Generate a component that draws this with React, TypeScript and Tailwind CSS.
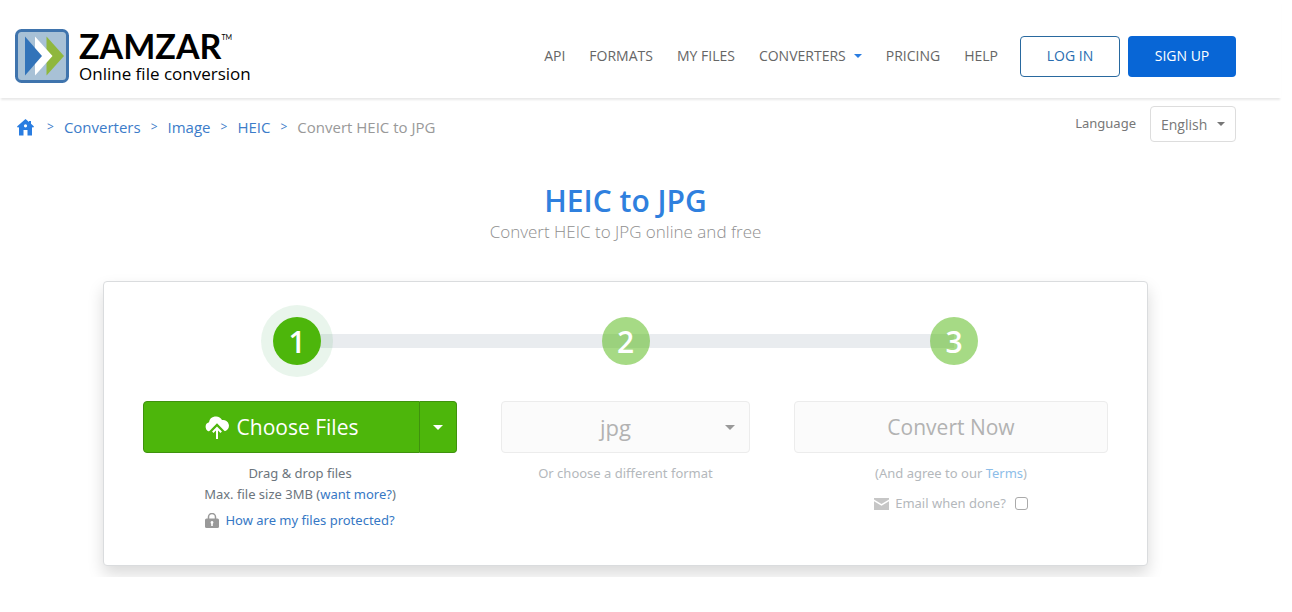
import type { ReactNode } from "react";

function Caret({ className }: { className: string }) {
  return (
    <svg viewBox="0 0 8 4" className={`pointer-events-none shrink-0 fill-current ${className}`} aria-hidden="true">
      <path d="M0 0h8L4 4z" />
    </svg>
  );
}

function LogoMark() {
  return (
    <svg viewBox="0 0 54 54" className="size-[54px] shrink-0" aria-hidden="true">
      <rect x="1.5" y="1.5" width="51" height="51" rx="5" fill="#a8c1d6" stroke="#3f74ad" strokeWidth="3" />
      <path d="M31.500 7.500 49 27 31.500 46.500z" fill="#8fb73e" />
      <path d="M20 7.500 37.500 27 20 46.500z" fill="#fff" />
      <path d="M10 7.500 27 27 10 46.500z" fill="#3273b9" />
    </svg>
  );
}

function HomeIcon() {
  return (
    <svg viewBox="0 0 17 17" className="h-[17px] w-[17px]" aria-hidden="true">
      <path
        fill="#2a7de1"
        fillRule="evenodd"
        d="M8.500 0 0 7.500l1 1.300L2 8v8.500h4.500V11h4v5.500H15V8l1 .8 1-1.300-3-2.700V2h-2v1zM8.500 5.200a1.600 1.600 0 1 1 0 3.200 1.600 1.600 0 0 1 0-3.200z"
      />
    </svg>
  );
}

function UploadIcon() {
  return (
    <svg viewBox="0 0 24 24" className="size-6" aria-hidden="true">
      <path
        fill="#fff"
        d="M5.200 16.500A4.700 4.700 0 0 1 4 7.300 7 7 0 0 1 17 5a5.800 5.800 0 0 1 2.200 11.500z"
      />
      <path d="M12 24V13M5.500 18.500 12 11.800l6.500 6.700" fill="none" stroke="#4db60b" strokeWidth="5" />
      <path d="M12 24V13M7.800 17.300 12 13l4.200 4.300" fill="none" stroke="#fff" strokeWidth="2" />
    </svg>
  );
}

function LockIcon() {
  return (
    <svg viewBox="0 0 14 15" className="h-[15px] w-3.5" aria-hidden="true">
      <path d="M3.500 7V4a3.500 3.500 0 0 1 7 0v3" fill="none" stroke="#999" strokeWidth="1.500" />
      <rect y="5.500" width="14" height="9.500" rx="1.500" fill="#999" />
      <path d="M7 8a1.500 1.500 0 0 1 .8 2.700V13H6.200v-2.300A1.500 1.500 0 0 1 7 8z" fill="#fff" />
    </svg>
  );
}

function MailIcon() {
  return (
    <svg viewBox="0 0 15 12" className="h-3 w-[15px]" aria-hidden="true">
      <path d="M0 0h15v1.500L7.500 6 0 1.500z" fill="#c6c6c6" />
      <path d="M0 3.200 7.500 7.700 15 3.200V12H0z" fill="#c6c6c6" />
    </svg>
  );
}

function NavLink({ children }: { children: ReactNode }) {
  return (
    <a href="#" className="text-[#666]">
      {children}
    </a>
  );
}

const crumbs = ["Converters", "Image", "HEIC"];

function Header() {
  return (
    <header className="relative shadow-[0_3px_2px_-1px_rgba(0,0,0,0.09)]">
      <div className="mr-[30px] flex h-[98px] items-center justify-between pt-3.5 pr-[15px] pl-[15px]">
        <a href="#" className="flex items-center gap-2.5 text-black">
          <LogoMark />
          <span className="flex flex-col font-['Lato',sans-serif]">
            <span className="flex items-start">
              <span className="text-[34px] leading-9 font-bold">ZAMZAR</span>
              <span className="pt-1 text-[7px] leading-[10px]">TM</span>
            </span>
            <span className="font-['Open_Sans',sans-serif] text-[17px] leading-5">Online file conversion</span>
          </span>
        </a>
        <nav className="flex items-center text-sm">
          <div className="mr-[22px] flex items-center gap-6">
            <NavLink>API</NavLink>
            <NavLink>FORMATS</NavLink>
            <NavLink>MY FILES</NavLink>
            <button type="button" className="flex items-center gap-2 text-[#666]">
              CONVERTERS
              <Caret className="h-1 w-2 text-[#2a7de1]" />
            </button>
            <NavLink>PRICING</NavLink>
            <NavLink>HELP</NavLink>
          </div>
          <a
            href="#"
            className="mr-2 flex h-[41px] w-[100px] items-center justify-center rounded border border-[#29699f] text-[#2a6db0]"
          >
            LOG IN
          </a>
          <a
            href="#"
            className="flex h-[41px] w-[108px] items-center justify-center rounded bg-[#0866d6] font-medium text-white"
          >
            SIGN UP
          </a>
        </nav>
      </div>
    </header>
  );
}

function Breadcrumbs() {
  return (
    <nav aria-label="Breadcrumb" className="pt-1.5">
      <ol className="flex items-center text-[15px] text-[#3c7cc9]">
        <li className="mr-[3px] ml-0.5">
          <a href="#" aria-label="Home">
            <HomeIcon />
          </a>
        </li>
        {crumbs.map((label) => (
          <li key={label} className="flex items-center">
            <span className="mx-2.5 text-xs">&gt;</span>
            <a href="#">{label}</a>
          </li>
        ))}
        <li className="flex items-center">
          <span className="mx-2.5 text-xs">&gt;</span>
          <span className="text-[#999]">Convert HEIC to JPG</span>
        </li>
      </ol>
    </nav>
  );
}

function LanguagePicker() {
  return (
    <div className="flex items-center gap-3.5 text-[#777]">
      <label htmlFor="language" className="font-['Noto_Sans',sans-serif] text-[13px]">
        Language
      </label>
      <div className="relative flex items-center">
        <select
          id="language"
          className="h-9 w-[86px] appearance-none rounded border border-[#ddd] bg-white pt-0.5 pl-2.5 text-sm text-[#777]"
        >
          <option>English</option>
        </select>
        <Caret className="absolute right-[11px] h-1 w-2" />
      </div>
    </div>
  );
}

function Stepper() {
  return (
    <ol className="relative mx-[130px] flex justify-between text-[30px] font-semibold text-white">
      <li aria-hidden="true" className="absolute inset-x-6 top-[17px] h-3.5 bg-[#e9ecef]" />
      <li className="relative flex size-12 items-center justify-center rounded-full bg-[#4db60b] shadow-[0_0_0_12px_rgba(40,160,70,0.1)]">
        1
      </li>
      {[2, 3].map((n) => (
        <li key={n} className="relative flex size-12 items-center justify-center rounded-full">
          <span className="absolute inset-0 rounded-full bg-[#4db60b]/50" />
          <span className="relative">{n}</span>
        </li>
      ))}
    </ol>
  );
}

function ConverterCard() {
  return (
    <form
      onSubmit={(event) => event.preventDefault()}
      className="mx-auto w-full max-w-[1045px] rounded border border-[#dadcde] bg-white px-[39px] pt-[35px] pb-[34px] shadow-[0_8px_16px_rgba(0,0,0,0.15)]"
    >
      <Stepper />
      <div className="mt-9 grid grid-cols-[314fr_249fr_314fr] gap-11 text-center font-['Noto_Sans',sans-serif] text-[13px] leading-[21px]">
        <div>
          <div className="mb-2.5 flex h-[52px] text-white">
            <button
              type="button"
              className="flex grow items-center justify-center gap-2 rounded-l border border-[#3f920d] bg-[#4db60b] font-['Open_Sans',sans-serif] text-[21px]"
            >
              <UploadIcon />
              Choose Files
            </button>
            <button
              type="button"
              aria-label="More sources"
              className="flex w-[37px] items-center justify-center rounded-r border border-l-0 border-[#3f920d] bg-[#4db60b]"
            >
              <Caret className="h-[5px] w-2.5" />
            </button>
          </div>
          <p className="text-[#6c757d]">Drag &amp; drop files</p>
          <p className="text-[#6c757d]">
            Max. file size 3MB (
            <a href="#" className="text-[#3678c5]">
              want more?
            </a>
            )
          </p>
          <p className="mt-[5px] flex items-center justify-center gap-1.5">
            <LockIcon />
            <a href="#" className="text-[#3678c5]">
              How are my files protected?
            </a>
          </p>
        </div>
        <div className="text-[#b4b8bc]">
          <div className="relative mb-2.5 flex items-center">
            <select
              aria-label="Output format"
              disabled
              className="h-[52px] w-full appearance-none rounded border border-[#ececec] bg-[#fbfbfb] pr-5 text-center font-['Open_Sans',sans-serif] text-[22px] leading-8 text-[#b2b2b2] opacity-100 [text-align-last:center]"
            >
              <option>jpg</option>
            </select>
            <Caret className="absolute right-[15px] h-[5px] w-2.5 text-[#999]" />
          </div>
          <p>Or choose a different format</p>
        </div>
        <div className="text-[#b4b8bc]">
          <button
            type="submit"
            disabled
            className="mb-2.5 block h-[52px] w-full rounded border border-[#ececec] bg-[#fbfbfb] font-['Open_Sans',sans-serif] text-[21px] text-[#b2b2b2]"
          >
            Convert Now
          </button>
          <p>
            (And agree to our{" "}
            <a href="#" className="text-[#8cbde8]">
              Terms
            </a>
            )
          </p>
          <label className="mt-[9px] flex items-center justify-center gap-1.5">
            <MailIcon />
            Email when done?
            <input
              type="checkbox"
              className="ml-[3px] size-[13px] appearance-none rounded-[3px] border border-[#aaa] bg-white checked:bg-[#8cbde8]"
            />
          </label>
        </div>
      </div>
    </form>
  );
}

export default function App() {
  return (
    <div className="mr-[11px] bg-white font-['Open_Sans','Noto_Sans',sans-serif]">
      <Header />
      <main className="overflow-hidden pr-[30px] pb-[11px]">
        <div className="flex items-center justify-between px-[15px] pt-2">
          <Breadcrumbs />
          <LanguagePicker />
        </div>
        <div className="mt-10 mb-[37px] text-center">
          <h1 className="text-[30px] leading-[38px] font-semibold text-[#2f80de]">HEIC to JPG</h1>
          <p className="text-[17px] leading-6 font-light text-[#8f8f8f]">Convert HEIC to JPG online and free</p>
        </div>
        <ConverterCard />
      </main>
    </div>
  );
}
